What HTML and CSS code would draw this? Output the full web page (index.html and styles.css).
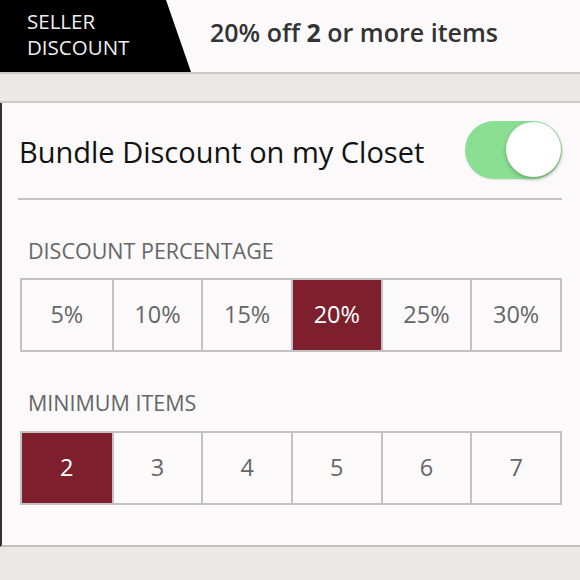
FILE: index.html
```html
<!DOCTYPE html>
<html>
<head>
<meta charset="utf-8">
<link rel="stylesheet" href="styles.css">
</head>
<body>
<div class="header">
  <div class="tag"><span>SELLER<br>DISCOUNT</span></div>
  <div class="summary">20% off <b>2</b> or more items</div>
</div>
<div class="band"></div>
<div class="card">
  <div class="row">
    <div class="row-label">Bundle Discount on my Closet</div>
    <div class="toggle"><div class="knob"></div></div>
  </div>
  <div class="section-label">DISCOUNT PERCENTAGE</div>
  <div class="seg">
    <div class="cell">5%</div>
    <div class="cell">10%</div>
    <div class="cell">15%</div>
    <div class="cell on">20%</div>
    <div class="cell">25%</div>
    <div class="cell">30%</div>
  </div>
  <div class="section-label second">MINIMUM ITEMS</div>
  <div class="seg">
    <div class="cell on">2</div>
    <div class="cell">3</div>
    <div class="cell">4</div>
    <div class="cell">5</div>
    <div class="cell">6</div>
    <div class="cell">7</div>
  </div>
</div>
<div class="footer"></div>
</body>
</html>
```
FILE: styles.css
```css
html, body {
  margin: 0;
  padding: 0;
}
body {
  width: 580px;
  height: 580px;
  overflow: hidden;
  background: #ebe9e6;
  font-family: "Open Sans", Lato, sans-serif;
}
.header {
  height: 74px;
  background: #fbf9f9;
  display: flex;
  align-items: stretch;
  border-bottom: 2px solid #cbc9c6;
  box-sizing: border-box;
}
.tag {
  width: 191px;
  background: #000;
  clip-path: polygon(0 0, 166px 0, 191px 100%, 0 100%);
  color: #eeeeee;
  font-size: 20.5px;
  line-height: 26px;
  padding: 8px 0 0 27px;
  box-sizing: border-box;
}
.summary {
  padding: 15px 0 0 19px;
  font-size: 25px;
  color: #333;
  font-weight: 600;
}
.summary b {
  font-weight: 700;
}
.band {
  height: 29px;
  border-bottom: 2px solid #cdcbc8;
  box-sizing: border-box;
}
.card {
  height: 444px;
  background: #fbf9f9;
  border-left: 2px solid #333;
  border-bottom: 2px solid #c3c1be;
  box-sizing: border-box;
  padding: 0 18px 0 16px;
}
.row {
  height: 97px;
  border-bottom: 2px solid #c4c2c2;
  box-sizing: border-box;
  display: flex;
  align-items: center;
  justify-content: space-between;
}
.row-label {
  font-size: 29px;
  color: #111;
  padding-left: 1px;
  margin-top: 2px;
}
.toggle {
  width: 97px;
  height: 58px;
  border-radius: 29px;
  background: #8adf92;
  position: relative;
  margin-top: -2px;
  box-shadow: 0 1px 2px rgba(0,0,0,0.1);
}
.knob {
  position: absolute;
  right: 1px;
  top: 1px;
  width: 55px;
  height: 55px;
  border-radius: 50%;
  background: #fff;
  box-shadow: 0 2px 4px rgba(0,0,0,0.25);
}
.section-label {
  font-size: 21.5px;
  color: #666;
  padding: 36px 0 0 10px;
  height: 78px;
  box-sizing: border-box;
}
.section-label.second {
  padding-top: 36px;
  height: 79px;
}
.seg {
  display: grid;
  grid-template-columns: repeat(6, 1fr);
  height: 74px;
  border: 2px solid #c3c1c1;
  box-sizing: border-box;
  margin-left: 2px;
}
.cell {
  display: flex;
  align-items: center;
  justify-content: center;
  font-size: 23.5px;
  color: #666;
  border-left: 2px solid #c3c1c1;
  padding-bottom: 2px;
}
.cell:first-child {
  border-left: none;
}
.cell.on {
  background: #7e1f2e;
  color: #fff;
}
.footer {
  height: 35px;
}
```
